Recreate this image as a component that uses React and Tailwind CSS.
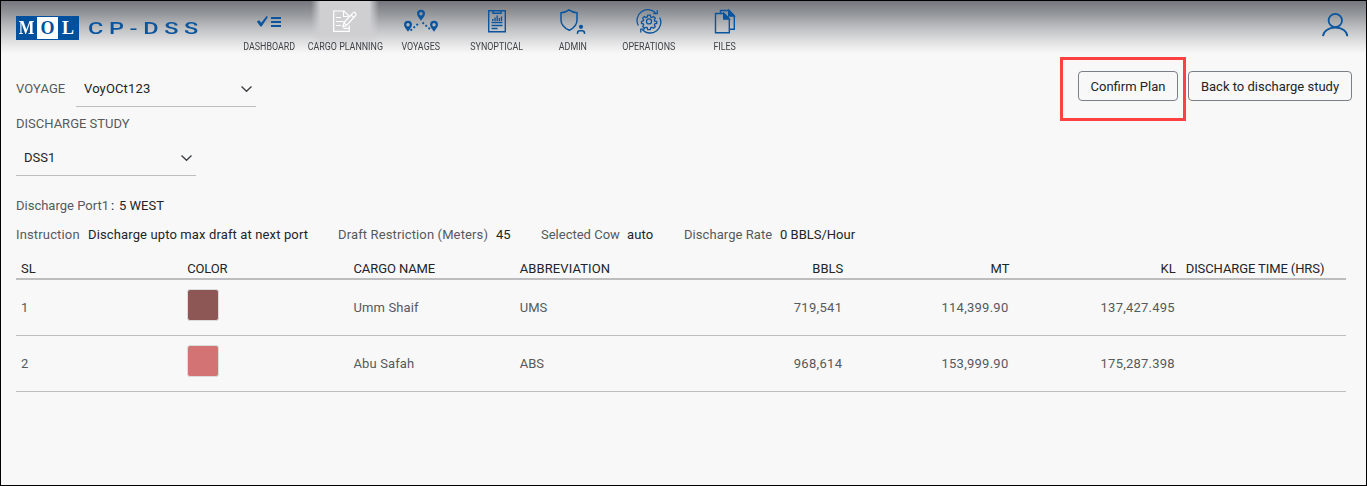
const blue = '#0b559f';

function DashboardIcon() {
  return (
    <svg width="26" height="26" viewBox="0 0 26 26" fill={blue}>
      <path d="M0.8 13.6 L3.4 12.2 L5.2 14.8 L10.6 8.1 L11.9 9 L5.6 18.4 L4.4 18.4 Z" />
      <path d="M15 9h10v2H15zM15 13h10v2H15zM15 17h10v2H15z" />
    </svg>
  );
}

function PlanningIcon() {
  return (
    <svg width="26" height="26" viewBox="0 0 26 26" fill="none" stroke="#fff" strokeWidth="1.2">
      <path d="M17 8.5V8L12 3H1.7v20.3H17.3V17.500M11.500 3v5.500H16" />
      <path d="M4 9.500h5M4 13.500h7.500M4 17.500h5M11.500 20.300H17" />
      <path d="M12 14.500L21.300 4.700q1-1 2 0l.5.6q.9 1-.1 2L14.500 17.500L10.800 18.800ZM12 14.500l2.500 3M19 7l2.700 2.700" />
    </svg>
  );
}

function VoyagesIcon() {
  return (
    <svg width="36" height="26" viewBox="0 0 36 26">
      <g fill={blue} fillRule="evenodd">
        <path id="pin" d="M18 1.700a4 4 0 0 1 4 4c0 2.400-2.600 4.600-4 7-1.400-2.400-4-4.600-4-7a4 4 0 0 1 4-4zm0 2.300a1.700 1.700 0 1 0 0 3.400a1.700 1.700 0 0 0 0-3.400z" />
        <use href="#pin" x="-13" y="11" />
        <use href="#pin" x="13" y="11" />
      </g>
      <path d="M7.500 22.500L16.500 14.500M19.500 14.500L28.500 22.500" stroke={blue} strokeWidth="1.900" strokeDasharray="1.900 2.100" fill="none" />
    </svg>
  );
}

function SynopticalIcon() {
  return (
    <svg width="26" height="26" viewBox="0 0 26 26" fill="none" stroke={blue} strokeWidth="1.400">
      <path d="M4.700 2.700h16.600v21H4.700z" />
      <path d="M9 3v2.300h8V3" />
      <path d="M7.500 14.500h11M7.500 17.500h11M7.500 20.500h6" />
      <path d="M8.800 13v-2M11 13V9.500M13.200 13V7.500M15.400 13V10M17.500 13V8.500" />
    </svg>
  );
}

function AdminIcon() {
  return (
    <svg width="26" height="26" viewBox="0 0 26 26" fill="none" stroke={blue} strokeWidth="1.500">
      <path d="M9 1.900C6.500 3.900 4 4.500 1 4.700V12c0 5 4 8.300 8.300 10.300C13.500 20.300 17 17 17 12V4.700C14 4.500 11.500 3.900 9 1.900z" />
      <circle cx="21" cy="18.800" r="2.100" fill={blue} stroke="none" />
      <path d="M17.500 26v-.8q0-2.400 2.400-2.400h2.200q2.400 0 2.400 2.400V26" />
    </svg>
  );
}

function OperationsIcon() {
  return (
    <svg width="26" height="26" viewBox="0 0 26 26" fill="none" stroke={blue} strokeWidth="1.300">
      <path d="M2.300 17.500A10.800 10.800 0 0 1 19.500 4.800M23.700 9.500A10.800 10.800 0 0 1 6.500 22" />
      <path d="M17.300 5.600h3.900V2.200M8.700 21.200H4.800v3.400" />
      <g transform="translate(0 .4)">
        <circle cx="13" cy="13" r="2.500" />
        <path d="M11.700 6.700h2.600l.4 1.900 1.200.5 1.700-1 1.700 1.700-1 1.700.5 1.200 1.900.4v2l-1.900.4-.5 1.200 1 1.500-1.700 1.700-1.700-1-1.200.5-.4 1.900h-2.600l-.4-1.900-1.200-.5-1.700 1-1.700-1.700 1-1.600-.5-1.200-1.700-.4v-2l1.700-.4.5-1.200-1-1.600 1.700-1.700 1.700 1 1.200-.5z" />
      </g>
    </svg>
  );
}

function FilesIcon() {
  return (
    <svg width="26" height="26" viewBox="0 0 26 26" fill="none" stroke={blue} strokeWidth="1.400">
      <path d="M3.500 5.500h8.500l5.300 5.300v13.900H3.500z" />
      <path d="M11.700 5.500v5.500h5.500z" fill={blue} />
      <path d="M8.500 5V2.500h8.700l5.100 5.200v13.500H18" />
      <path d="M16.700 2.500V8h5.500z" fill={blue} />
    </svg>
  );
}

function Chevron() {
  return (
    <svg width="13" height="8" viewBox="0 0 13 8" fill="none" stroke="#3f4347" strokeWidth="1.400">
      <path d="M1.500 1.500L6.500 6.300L11.500 1.500" />
    </svg>
  );
}

const nav = [
  { label: 'DASHBOARD', Icon: DashboardIcon },
  { label: 'CARGO PLANNING', Icon: PlanningIcon, active: true },
  { label: 'VOYAGES', Icon: VoyagesIcon },
  { label: 'SYNOPTICAL', Icon: SynopticalIcon },
  { label: 'ADMIN', Icon: AdminIcon },
  { label: 'OPERATIONS', Icon: OperationsIcon },
  { label: 'FILES', Icon: FilesIcon },
];

const details = [
  { label: 'Instruction', value: 'Discharge upto max draft at next port', lw: 'w-[72px] tracking-[0.15px]', vw: 'w-[250px] tracking-[0.13px]' },
  { label: 'Draft Restriction (Meters)', value: '45', lw: 'w-[158px] tracking-[0.13px]', vw: 'w-[45px]' },
  { label: 'Selected Cow', value: 'auto', lw: 'w-[86px]', vw: 'w-[57px] tracking-[0.15px]' },
  { label: 'Discharge Rate', value: '0 BBLS/Hour', lw: 'w-[96px] tracking-[0.06px]', vw: 'w-[90px]' },
];

const columns = [
  { label: 'SL', style: 'px-[5px]' },
  { label: 'COLOR', style: 'px-[5px] tracking-[-0.2px]' },
  { label: 'CARGO NAME', style: 'px-[5px] tracking-[-0.1px]' },
  { label: 'ABBREVIATION', style: 'px-[5px] tracking-[0.1px]' },
  { label: 'BBLS', style: 'px-1 text-right' },
  { label: 'MT', style: 'px-1 text-right' },
  { label: 'KL', style: 'px-1 text-right' },
  { label: 'DISCHARGE TIME (HRS)', style: 'px-[6px] tracking-[-0.1px]' },
];

const rows = [
  { sl: 1, color: 'bg-[#8d5755]', name: 'Umm Shaif', abbr: 'UMS', bbls: '719,541', mt: '114,399.90', kl: '137,427.495' },
  { sl: 2, color: 'bg-[#d37373]', name: 'Abu Safah', abbr: 'ABS', bbls: '968,614', mt: '153,999.90', kl: '175,287.398' },
];

function Header() {
  return (
    <header className="flex h-[53px] bg-[linear-gradient(to_bottom,#74777d_0%,#8e9195_20%,#c0c1c3_52%,#e9e9ea_84%,#f8f8f8_100%)] pl-[15px]">
      <div className="mt-[15px] flex h-6 w-[63px] border border-[#00509d] font-['Liberation_Serif',serif] text-[18px] leading-[23px] font-bold">
        <span className="w-5 bg-[#00509d] text-center text-white"><span className="-ml-px inline-block scale-x-[0.92]">M</span></span>
        <span className="w-[21px] bg-white text-center text-[#00509d]">O</span>
        <span className="w-5 bg-[#00509d] text-center text-white">L</span>
      </div>
      <div className="mt-[15px] ml-[9px] w-[143px] whitespace-nowrap">
        <span className="inline-block origin-left scale-x-[1.38] font-['Roboto',sans-serif] text-[17px] leading-[25px] font-medium tracking-[4.1px] text-[#0b559f]">CP-DSS</span>
      </div>
      <nav className="flex">
        {nav.map(({ label, Icon, active }) => (
          <div key={label} className="relative flex w-[76px] flex-col items-center">
            {active && (
              <span className="absolute top-0 left-[4px] h-[50px] w-[68px] bg-[linear-gradient(to_right,transparent,#cfcfd2_14%,#cfcfd2_86%,transparent)] [mask-image:linear-gradient(to_bottom,black_60%,transparent)]" />
            )}
            <span className="relative mt-[7px] flex h-[26px]"><Icon /></span>
            <span className="relative mt-[7px] scale-x-[0.89] text-[10px] leading-3 whitespace-nowrap text-[#3f4347]">{label}</span>
          </div>
        ))}
      </nav>
      <svg className="mt-[11px] mr-[17px] ml-auto" width="28" height="26" viewBox="0 0 28 26" fill="none" stroke={blue} strokeWidth="1.800">
        <circle cx="14.300" cy="8.500" r="6.700" />
        <path d="M2 24.200C2.500 19 7.500 15.700 14.300 15.700S26 19 26.300 24.200" />
      </svg>
    </header>
  );
}

function Select({ value, className }) {
  return (
    <div className={`flex h-9 w-[180px] items-center justify-between border-b border-[#bdbdbd] pr-[3px] pl-2 text-[#212529] ${className}`}>
      <span>{value}</span>
      <Chevron />
    </div>
  );
}

export default function App() {
  return (
    <div className="h-[486px] w-[1367px] overflow-hidden border border-black bg-[#f8f8f8] font-['Roboto',sans-serif] text-[13px] leading-5 text-[#56595d]">
      <Header />
      <main className="pr-[14px] pl-[15px]">
        <div className="flex items-start pt-[3px]">
          <div className="mt-[14px] flex items-center">
            <span className="w-[60px] tracking-[0.1px]">VOYAGE</span>
            <Select value="VoyOCt123" className="tracking-[0.15px]" />
          </div>
          <div className="ml-auto flex h-16 w-[126px] justify-end border-[3px] border-[#ff4141] pt-[11px] pr-[5px]">
            <button className="h-[30px] w-[100px] rounded border border-[#7b8087] pt-[2px] text-[#212529]">Confirm Plan</button>
          </div>
          <button className="mt-[14px] ml-[2px] h-[30px] w-[164px] rounded border border-[#7b8087] pt-[2px] text-[#212529]">Back to discharge study</button>
        </div>
        <div className="-mt-[7px]">DISCHARGE STUDY</div>
        <Select value="DSS1" className="mt-[6px]" />
        <div className="mt-5 flex h-5 whitespace-pre text-[#212529]">
          <span className="w-[95px] text-[#56595d]">Discharge Port1</span>
          <span className="w-2">:</span>
          <span>5 WEST</span>
        </div>
        <div className="mt-[9px] flex h-5 whitespace-nowrap">
          {details.map((d) => (
            <div key={d.label} className="flex">
              <span className={d.lw}>{d.label}</span>
              <span className={`text-[#212529] ${d.vw}`}>{d.value}</span>
            </div>
          ))}
        </div>
        <div className="mt-[13px] w-[1330px]">
          <div className="grid h-[22px] grid-cols-8 border-b-2 border-[#bdbdbd] leading-[21px] whitespace-nowrap text-[#212529]">
            {columns.map((c) => (
              <div key={c.label} className={c.style}>{c.label}</div>
            ))}
          </div>
          {rows.map((r) => (
            <div key={r.sl} className="grid h-14 grid-cols-8 items-center border-b border-[#bdbdbd]">
              <div className="px-[5px]">{r.sl}</div>
              <div className="px-[5px]">
                <div className={`-mt-[5px] size-8 rounded-[3px] border border-[#dcdcdc] ${r.color}`} />
              </div>
              <div className="px-[5px] tracking-[0.12px]">{r.name}</div>
              <div className="px-[5px]">{r.abbr}</div>
              <div className="px-[5px] text-right tracking-[0.3px]">{r.bbls}</div>
              <div className="px-[5px] text-right tracking-[0.26px]">{r.mt}</div>
              <div className="px-[5px] text-right tracking-[0.22px]">{r.kl}</div>
              <div />
            </div>
          ))}
        </div>
      </main>
    </div>
  );
}
